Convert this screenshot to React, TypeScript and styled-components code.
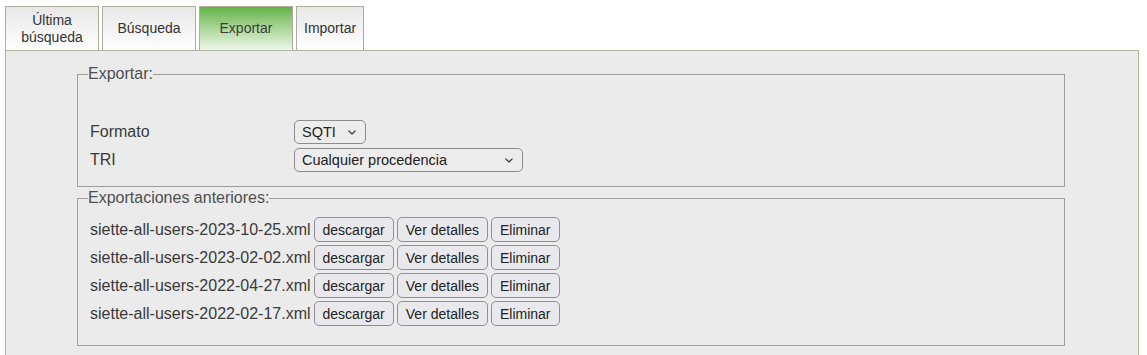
import React from "react";
import styled, { createGlobalStyle } from "styled-components";

const GlobalStyle = createGlobalStyle`
  html, body {
    margin: 0;
    padding: 0;
    background: #ffffff;
    font-family: "Liberation Sans", Arial, Helvetica, sans-serif;
    color: #333333;
  }
`;

const Page = styled.div`
  padding: 6px 8px 0 5px;
  height: 349px;
  overflow: hidden;
`;

const TabBar = styled.div`
  display: flex;
  gap: 3px;
  align-items: flex-end;
`;

const Tab = styled.div<{ $active?: boolean; $width?: number }>`
  box-sizing: border-box;
  height: 44px;
  width: ${(p) => (p.$width ? `${p.$width}px` : "auto")};
  padding: 0 7px;
  display: flex;
  align-items: center;
  justify-content: center;
  text-align: center;
  font-size: 14px;
  line-height: 17px;
  color: ${(p) => (p.$active ? "#3d3d3d" : "#333333")};
  border: 1px solid #aeae9e;
  border-bottom: none;
  background: ${(p) =>
    p.$active
      ? "linear-gradient(to bottom, #63b349 0%, #a4d391 45%, #eef8ea 100%)"
      : "linear-gradient(to bottom, #e8e8e8 0%, #f4f4f4 55%, #ffffff 100%)"};
`;

const Panel = styled.div`
  box-sizing: border-box;
  border: 1px solid #b3b3a4;
  background: #ebebeb;
  padding: 14px 73px 40px 71px;
  display: flex;
  flex-direction: column;
  gap: 2px;
`;

const Fieldset = styled.fieldset<{ $padTop: number; $padBottom: number }>`
  margin: 0;
  border: 1px solid #9c9c9c;
  padding: ${(p) => p.$padTop}px 12px ${(p) => p.$padBottom}px 12px;
  min-width: 0;
`;

const Legend = styled.legend`
  padding: 0;
  margin-left: -2px;
  font-size: 16px;
  line-height: 18px;
  color: #4f4f4f;
`;

const FormGrid = styled.div`
  display: grid;
  grid-template-columns: 204px auto;
  row-gap: 4px;
  align-items: center;
  justify-items: start;
`;

const Label = styled.div`
  font-size: 16px;
  color: #3a3a3a;
`;

const SelectBox = styled.div<{ $width: number }>`
  box-sizing: border-box;
  width: ${(p) => p.$width}px;
  height: 24px;
  border: 1px solid #8e8e8e;
  border-radius: 5px;
  background: #ececec;
  display: flex;
  align-items: center;
  justify-content: space-between;
  padding: 0 9px 0 7px;
  font-size: 14.5px;
  color: #222222;
`;

const Chevron = () => (
  <svg width="8" height="5" viewBox="0 0 8 5" aria-hidden="true">
    <path d="M0.8 0.8 L4 4 L7.2 0.8" fill="none" stroke="#333" strokeWidth="1.2" strokeLinecap="round" strokeLinejoin="round" />
  </svg>
);

const ExportList = styled.div`
  display: flex;
  flex-direction: column;
  gap: 3px;
`;

const ExportRow = styled.div`
  display: flex;
  align-items: center;
  gap: 3px;
  height: 25px;
`;

const FileName = styled.span`
  font-size: 16px;
  color: #3a3a3a;
`;

const Button = styled.button`
  box-sizing: border-box;
  height: 25px;
  padding: 0 8px;
  border: 1px solid #8f8f99;
  border-radius: 5px;
  background: #e9e9ed;
  font-family: "Liberation Sans", Arial, Helvetica, sans-serif;
  font-size: 14px;
  color: #222222;
  cursor: pointer;
`;

const files = [
  "siette-all-users-2023-10-25.xml",
  "siette-all-users-2023-02-02.xml",
  "siette-all-users-2022-04-27.xml",
  "siette-all-users-2022-02-17.xml",
];

export default function App() {
  return (
    <>
      <GlobalStyle />
      <Page>
        <TabBar>
          <Tab $width={94}>Última<br />búsqueda</Tab>
          <Tab $width={94}>Búsqueda</Tab>
          <Tab $width={94} $active>Exportar</Tab>
          <Tab>Importar</Tab>
        </TabBar>
        <Panel>
          <Fieldset $padTop={37} $padBottom={14}>
            <Legend>Exportar:</Legend>
            <FormGrid>
              <Label>Formato</Label>
              <SelectBox $width={72}>
                <span>SQTI</span>
                <Chevron />
              </SelectBox>
              <Label>TRI</Label>
              <SelectBox $width={229}>
                <span>Cualquier procedencia</span>
                <Chevron />
              </SelectBox>
            </FormGrid>
          </Fieldset>
          <Fieldset $padTop={10} $padBottom={19}>
            <Legend>Exportaciones anteriores:</Legend>
            <ExportList>
              {files.map((f) => (
                <ExportRow key={f}>
                  <FileName>{f}</FileName>
                  <Button>descargar</Button>
                  <Button>Ver detalles</Button>
                  <Button>Eliminar</Button>
                </ExportRow>
              ))}
            </ExportList>
          </Fieldset>
        </Panel>
      </Page>
    </>
  );
}
